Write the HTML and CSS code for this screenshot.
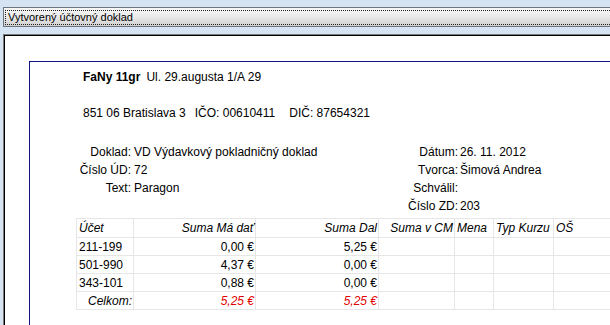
FILE: index.html
```html
<!DOCTYPE html>
<html lang="sk">

<head>
  <meta charset="UTF-8">
  <meta name="viewport" content="width=device-width, initial-scale=1.0">
  <title>Vytvorený účtovný doklad</title>
  <link rel="stylesheet" href="styles.css">
</head>

<body>
  <div class="tab">
    <div class="tab-caption">Vytvorený účtovný doklad</div>
  </div>

  <div class="panel">
    <div class="page">
      <div class="company">
        <p class="line"><b>FaNy 11gr</b><span class="street">Ul. 29.augusta 1/A 29</span></p>
        <p class="line address">851 06 Bratislava 3<span class="ico">IČO: 00610411</span><span class="dic">DIČ: 87654321</span></p>
      </div>

      <div class="info">
        <span class="lbl">Doklad:</span><span class="val">VD Výdavkový pokladničný doklad</span>
        <span class="lbl lbl-right">Dátum:</span><span class="val val-right">26. 11. 2012</span>

        <span class="lbl">Číslo ÚD:</span><span class="val">72</span>
        <span class="lbl lbl-right">Tvorca:</span><span class="val val-right">Šimová Andrea</span>

        <span class="lbl">Text:</span><span class="val">Paragon</span>
        <span class="lbl lbl-right">Schválil:</span><span class="val val-right"></span>

        <span class="lbl"></span><span class="val"></span>
        <span class="lbl lbl-right">Číslo ZD:</span><span class="val val-right">203</span>
      </div>

      <table class="entries">
        <colgroup>
          <col class="c-ucet">
          <col class="c-md">
          <col class="c-dal">
          <col class="c-cm">
          <col class="c-mena">
          <col class="c-kurz">
          <col class="c-os">
        </colgroup>
        <thead>
          <tr>
            <th>Účet</th>
            <th class="num">Suma Má dať</th>
            <th class="num">Suma Dal</th>
            <th class="num">Suma v CM</th>
            <th>Mena</th>
            <th>Typ Kurzu</th>
            <th>OŠ</th>
          </tr>
        </thead>
        <tbody>
          <tr>
            <td>211-199</td>
            <td class="num">0,00 €</td>
            <td class="num">5,25 €</td>
            <td></td><td></td><td></td><td></td>
          </tr>
          <tr>
            <td>501-990</td>
            <td class="num">4,37 €</td>
            <td class="num">0,00 €</td>
            <td></td><td></td><td></td><td></td>
          </tr>
          <tr>
            <td>343-101</td>
            <td class="num">0,88 €</td>
            <td class="num">0,00 €</td>
            <td></td><td></td><td></td><td></td>
          </tr>
          <tr class="total">
            <td class="num">Celkom:</td>
            <td class="num red">5,25 €</td>
            <td class="num red">5,25 €</td>
            <td></td><td></td><td></td><td></td>
          </tr>
        </tbody>
      </table>
    </div>
  </div>
</body>

</html>
```

FILE: styles.css
```css
body {
  margin: 0;
  background-color: #d6e3f2;
  font-family: "Liberation Sans", Arial, sans-serif;
  font-size: 12px;
  color: #000;
  overflow: hidden;
  height: 325px;
}

/* window caption tab */
.tab {
  margin: 7px 0 0 3px;
  height: 18px;
  border: 1px solid #6c7580;
  border-right: none;
  padding: 2px 0 1px 1px;
  box-sizing: border-box;
  height: 20px;
  background: linear-gradient(#f7f7f7, #e9e9e9 50%, #d0d0d0);
}

.tab-caption {
  height: 13px;
  line-height: 13px;
  border: 1px dotted #222;
  border-right: none;
  padding-left: 2px;
  font-size: 11px;
}

/* sunken white panel */
.panel {
  margin: 7px 0 0 3px;
  height: 300px;
  background-color: white;
  border-top: 1px solid #7a7a7a;
  border-left: 1px solid #7a7a7a;
  box-shadow: inset 1px 1px 0 #000;
  overflow: hidden;
}

.page {
  margin: 26px 0 0 25px;
  height: 280px;
  border-top: 1px solid #12127e;
  border-left: 1px solid #12127e;
}

.company {
  padding: 6px 0 0 53px;
}

.line {
  margin: 0;
  height: 18px;
  line-height: 18px;
  white-space: nowrap;
}

.address {
  margin-top: 18px;
}

.street {
  margin-left: 6px;
}

.ico {
  margin-left: 9px;
}

.dic {
  margin-left: 14px;
}

.info {
  margin-top: 21px;
  display: grid;
  grid-template-columns: 101px 269px 58px auto;
  grid-auto-rows: 18px;
  line-height: 18px;
  white-space: nowrap;
}

.lbl {
  text-align: right;
}

.val {
  padding-left: 3px;
}

.val-right {
  padding-left: 2px;
}

/* accounting entries */
.entries {
  margin: 3px 0 0 46px;
  border-collapse: collapse;
  table-layout: fixed;
  width: 557px;
}

.c-ucet { width: 57px; }
.c-md { width: 122px; }
.c-dal { width: 123px; }
.c-cm { width: 76px; }
.c-mena { width: 39px; }
.c-kurz { width: 60px; }
.c-os { width: 80px; }

.entries th,
.entries td {
  border: 1px solid #e6e6e6;
  padding: 0 2px;
  height: 17px;
  text-align: left;
  white-space: nowrap;
  overflow: visible;
}

.entries th {
  height: 18px;
  font-weight: normal;
  font-style: italic;
}

.entries .num {
  text-align: right;
  padding-right: 1px;
}

.total td {
  font-style: italic;
}

.red {
  color: #e00000;
}
```
